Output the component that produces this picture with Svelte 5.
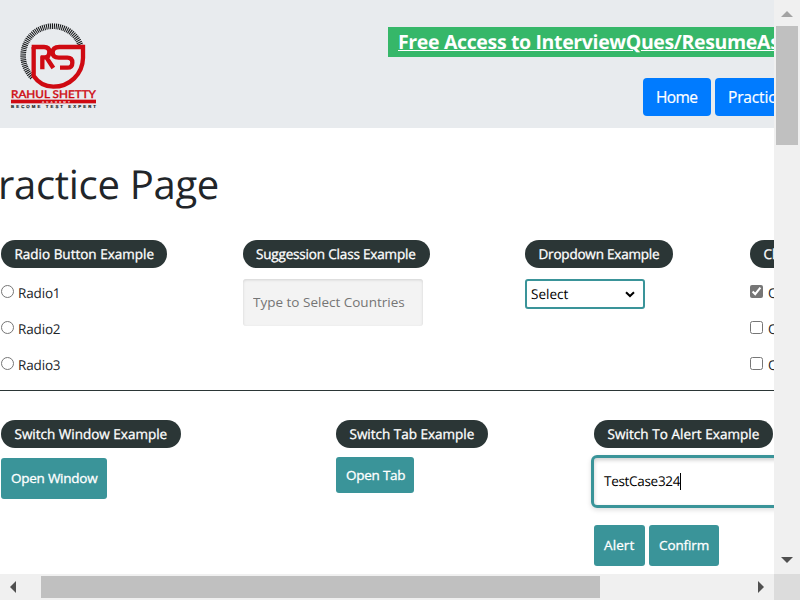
<script>
  const radios = ['Radio1', 'Radio2', 'Radio3'];
  const options = [
    { name: 'Option1', checked: true },
    { name: 'Option2', checked: false },
    { name: 'Option3', checked: false }
  ];
</script>

<div class="window">
  <main>
    <header>
      <svg class="logo" width="110" height="105" viewBox="0 0 330 315" aria-label="Rahul Shetty Academy">
        <path d="M97 187A89 89 0 1 1 242 92" fill="none" stroke="#17191b" stroke-width="17" stroke-dasharray="3.2 2.6" />
        <path d="M101 96V183C116 205 137 215 160 215C209 215 248 177 249 129V96H178Q158 96 158 112Q158 128 176 128H202Q217 128 217 143Q217 158 202 158H180" fill="none" stroke="#cf0a12" stroke-width="13" />
        <path d="M95 96H132Q148 96 148 110Q148 127 134 127H122M127 163V124M141 130L160 159" fill="none" stroke="#cf0a12" stroke-width="13" />
        <text class="brand" x="33" y="249" textLength="255" lengthAdjust="spacingAndGlyphs">RAHUL SHETTY</text>
        <rect x="33" y="254" width="255" height="11" fill="#cf0a12" />
        <text class="academy" x="126" y="263" textLength="84">ACADEMY</text>
        <text class="motto" x="33" y="279" textLength="255">BECOME TEST EXPERT</text>
      </svg>
      <div class="header-links">
        <a class="promo"><span>Free Access to InterviewQues/ResumeAssistance</span></a>
        <nav>
          <button class="home">Home</button>
          <button>Practice</button>
        </nav>
      </div>
    </header>

    <h1>ractice Page</h1>

    <div class="row first">
      <section>
        <h2 class="l1">Radio Button Example</h2>
        {#each radios as radio}
          <label><input type="radio" name="radio" /><span>{radio}</span></label>
        {/each}
      </section>
      <section>
        <h2 class="l2">Suggession Class Example</h2>
        <input class="countries" placeholder="Type to Select Countries" />
      </section>
      <section>
        <h2 class="l3">Dropdown Example</h2>
        <div class="select">
          <span>Select</span>
          <svg width="10" height="7" viewBox="0 0 10 7"><path d="M1 1.2L5 5L9 1.2" fill="none" stroke="#000" stroke-width="2" /></svg>
        </div>
      </section>
      <section>
        <h2 class="l4">Checkbox Example</h2>
        {#each options as option}
          <label><input type="checkbox" checked={option.checked} /><span>{option.name}</span></label>
        {/each}
      </section>
    </div>

    <div class="row second">
      <section>
        <h2 class="l5">Switch Window Example</h2>
        <button class="teal win">Open Window</button>
      </section>
      <section>
        <h2 class="l6">Switch Tab Example</h2>
        <button class="teal tab">Open Tab</button>
      </section>
      <section>
        <h2 class="l7">Switch To Alert Example</h2>
        <div class="name-field"><span>TestCase324</span><i></i></div>
        <div class="actions">
          <button class="teal alert">Alert</button>
          <button class="teal confirm">Confirm</button>
        </div>
      </section>
    </div>
  </main>

  <div class="vbar">
    <svg width="26" height="26"><path d="M7 17L13 11L19 17Z" fill="#a3a3a3" /></svg>
    <div class="vthumb"></div>
    <svg class="down" width="26" height="26"><path d="M7 9H19L13 15Z" fill="#505050" /></svg>
  </div>
  <div class="hbar">
    <svg width="41" height="26"><path d="M16 7V19L10 13Z" fill="#505050" /></svg>
    <div class="hthumb"></div>
    <svg class="right" width="26" height="26"><path d="M10 7V19L16 13Z" fill="#505050" /></svg>
  </div>
  <div class="corner"></div>
</div>

<style>
  :global(body) { margin: 0; overflow: hidden; }
  .window, .window * { box-sizing: border-box; }
  .window {
    width: 800px; height: 600px; display: grid;
    grid-template: 574px 26px / 774px 26px;
    overflow: hidden; background: #fff; color: #212529;
    font: 13.5px/20px "Open Sans", "Noto Sans", sans-serif;
    text-rendering: geometricPrecision;
  }
  button, input { font: inherit; }
  main { overflow: hidden; min-width: 0; }
  header { height: 128px; background: #e8ebee; display: flex; padding-top: 15px; overflow: hidden; }
  .logo { flex: none; }
  .brand { font: 500 32px "Lato", sans-serif; fill: #cf0a12; stroke: #cf0a12; stroke-width: 1; }
  .academy { font: bold 9px "Liberation Sans", sans-serif; fill: #fff; }
  .motto { font: bold 13px "Liberation Sans", sans-serif; fill: #17191b; stroke: #17191b; stroke-width: 0.5; }
  .header-links { margin-left: 278px; padding-top: 12px; flex: none; width: 600px; }
  .promo {
    display: block; height: 30px; line-height: 30px; padding-left: 10px;
    background: #36b769; color: #fff; font-size: 19.5px; font-weight: 700;
    white-space: nowrap; text-decoration: underline; letter-spacing: -0.35px;
  }
  nav { display: flex; gap: 4px; margin: 21px 0 0 255px; }
  nav button {
    height: 38px; width: 110px; padding: 0 0 1px 13px; border: 0; border-radius: 4px;
    background: #007bff; color: #fff; font-size: 15.5px; text-align: left; white-space: nowrap;
    letter-spacing: -0.15px; -webkit-text-stroke: 0.2px;
  }
  nav .home { width: 68px; letter-spacing: -0.6px; }
  h1 { margin: 0 0 0 -2px; padding-top: 32px; height: 112px; font-size: 40px; line-height: 48px; font-weight: 400; white-space: nowrap; letter-spacing: -0.3px; }
  .row { display: grid; }
  .first { grid-template-columns: 243px 282px 225px 200px; height: 151px; border-bottom: 1px solid #2b3636; }
  .second { grid-template-columns: 336px 258px 260px; padding-top: 29px; }
  section { display: flex; flex-direction: column; align-items: flex-start; min-width: 0; }
  h2 {
    margin: 0; height: 28px; line-height: 28px; border-radius: 14px; padding-left: 13.5px;
    background: #2b3636; color: #fff; font-size: 13.5px; font-weight: 500; white-space: nowrap;
    -webkit-text-stroke: 0.3px;
  }
  .l1 { width: 166px; }
  .l2 { width: 187px; padding-left: 13px; letter-spacing: -0.17px; }
  .l3 { width: 148px; letter-spacing: -0.2px; }
  .l4 { width: 150px; }
  .l5 { width: 180px; }
  .l6 { width: 152px; }
  .l7 { width: 179px; letter-spacing: 0.06px; }
  .row section:first-child > :not(label) { margin-left: 1px; }
  label { display: flex; height: 36px; padding-top: 15px; line-height: 20px; letter-spacing: -0.15px; }
  label input { flex: none; width: 13px; height: 13px; margin: 2px 4px 0 1px; accent-color: #767676; }
  section:last-child label input { margin: 2px 5px 0 0; }
  .countries {
    width: 180px; height: 47px; margin-top: 11px; padding: 0 10px 1px; border: 0; border-radius: 3px;
    background: #f3f3f3; box-shadow: inset 0 1px 3px #0002; outline: none;
  }
  .countries::placeholder { color: #757575; opacity: 1; }
  .select {
    width: 120px; height: 30px; margin-top: 11px; padding: 0 8px 0 4px; display: flex; align-items: center;
    justify-content: space-between; border: 2px solid #3a9499; border-radius: 3px; color: #000;
  }
  .teal {
    border: 0; border-radius: 3px; padding: 0 0 1px 10px; text-align: left; background: #3a9499; color: #fff;
    font-weight: 500; white-space: nowrap; letter-spacing: -0.25px; -webkit-text-stroke: 0.3px;
  }
  .win { width: 106px; height: 41px; margin-top: 10px; }
  .tab { width: 78px; height: 36px; margin-top: 9px; padding-bottom: 0; }
  .name-field {
    width: 230px; height: 53px; margin: 7px 0 0 -3px; padding: 0 0 1px 10px; display: flex; align-items: center;
    border: 3px solid #3a9499; border-radius: 6px; color: #000; letter-spacing: -0.3px;
    box-shadow: inset 0 2px 4px #0003, 0 2px 5px #0002;
  }
  .name-field i { width: 1px; height: 17px; background: #000; }
  .actions { display: flex; gap: 4px; margin-top: 17px; }
  .alert { width: 51px; height: 41px; letter-spacing: 0.1px; }
  .confirm { width: 70px; height: 41px; letter-spacing: -0.1px; }
  .vbar { background: #f0f0f0; display: flex; flex-direction: column; }
  .vthumb { width: 22px; height: 119px; margin-left: 2px; background: #c0c0c0; }
  .down, .right { margin-top: auto; }
  .hbar { background: #f0f0f0; display: flex; }
  .hthumb { width: 559px; height: 22px; margin-top: 2px; background: #c0c0c0; }
  .right { margin: 0 0 0 auto; }
  .corner { background: #dcdcdc; }
</style>
